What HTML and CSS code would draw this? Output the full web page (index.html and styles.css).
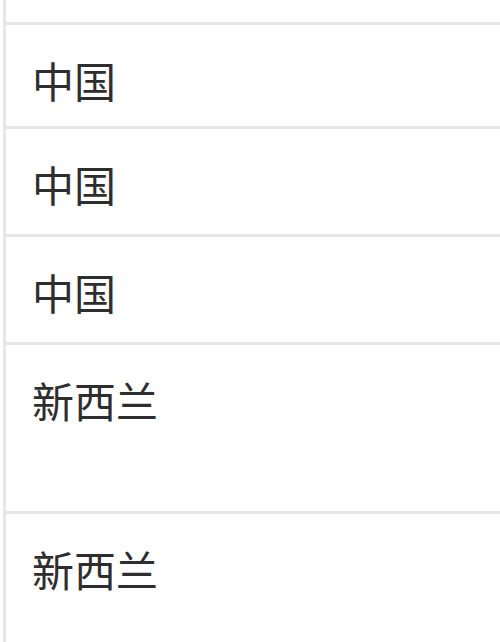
FILE: index.html
```html
<!DOCTYPE html>
<html lang="zh-CN">
<head>
<meta charset="utf-8">
<link rel="stylesheet" href="styles.css">
</head>
<body>
<div class="sheet">
  <div class="table">
    <div class="row row-top"></div>
    <div class="row row-a"><span class="cell">中国</span></div>
    <div class="row row-b"><span class="cell">中国</span></div>
    <div class="row row-b"><span class="cell">中国</span></div>
    <div class="row row-tall"><span class="cell">新西兰</span></div>
    <div class="row row-last"><span class="cell">新西兰</span></div>
  </div>
</div>
</body>
</html>
```

FILE: styles.css
```css
html, body {
  margin: 0;
  padding: 0;
  background: #ffffff;
}
.sheet {
  width: 500px;
  height: 642px;
  overflow: hidden;
  padding-left: 3px;
  box-sizing: border-box;
}
.table {
  border-left: 3px solid #e6e6e6;
  display: flex;
  flex-direction: column;
}
.row {
  box-sizing: border-box;
  border-top: 3px solid #e6e6e6;
  padding: 34px 0 0 26px;
  font-family: "Noto Sans CJK SC", sans-serif;
  font-size: 42px;
  line-height: 42px;
  color: #2e2e2e;
}
.row-top {
  border-top: none;
  height: 22px;
  padding: 0;
}
.row-a { height: 104px; }
.row-b { height: 108px; }
.row-tall { height: 169px; }
.row-last { height: 140px; }
```
